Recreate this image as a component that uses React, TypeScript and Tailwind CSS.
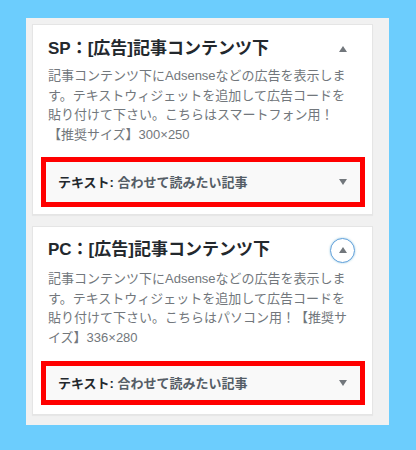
import React from "react";

const font = { fontFamily: '"Liberation Sans", "Noto Sans CJK JP", sans-serif' };

function Tri({ down = false }: { down?: boolean }) {
  return (
    <svg width="8" height="6" viewBox="0 0 8 6" className="block">
      {down ? <polygon points="0,0 8,0 4,6" fill="#72777c" /> : <polygon points="4,0 8,6 0,6" fill="#72777c" />}
    </svg>
  );
}

function Widget({ h }: { h: string }) {
  return (
    <div className="ml-[8px] mr-[7px] border-[5px] border-[#ff0000]">
      <div className={`${h} bg-[#f9f9f9] flex items-center justify-between pl-[12px] pr-[13px]`}>
        <div className="text-[13px] font-bold leading-none">
          <span className="text-[#23282d]">テキスト:</span>
          <span className="text-[#555d66]"> 合わせて読みたい記事</span>
        </div>
        <Tri down />
      </div>
    </div>
  );
}

export default function App() {
  return (
    <div className="w-[416px] h-[450px] bg-[#6ccdfd] pt-[18px] pl-[26px]" style={font}>
      <div className="w-[363px] bg-[#f1f1f1] pt-[6px] pl-[6px] pr-[16px] pb-[10px] flex flex-col gap-[11px]">
        {/* Card 1 */}
        <div className="bg-white border border-[#e5e5e5] shadow-[0_1px_1px_rgba(0,0,0,0.04)] pt-[12px] pb-[7px]">
          <div className="flex items-center justify-between pl-[15px] pr-[17px] h-[24px]">
            <h3 className="text-[17px] font-bold text-[#23282d] leading-[24px]">SP：[広告]記事コンテンツ下</h3>
            <div className="w-[24px] h-[24px] flex items-center justify-center">
              <Tri />
            </div>
          </div>
          <p className="mt-[5px] px-[15px] text-[13px] leading-[19.5px] text-[#72777c]">
            記事コンテンツ下にAdsenseなどの広告を表示します。テキストウィジェットを追加して広告コードを貼り付けて下さい。こちらはスマートフォン用！【推奨サイズ】300×250
          </p>
          <div className="mt-[13px]">
            <Widget h="h-[40px]" />
          </div>
        </div>
        {/* Card 2 */}
        <div className="bg-white border border-[#e5e5e5] shadow-[0_1px_1px_rgba(0,0,0,0.04)] pt-[11px] pb-[9px]">
          <div className="flex items-center justify-between pl-[15px] pr-[17px] h-[24px]">
            <h3 className="text-[17px] font-bold text-[#23282d] leading-[24px]">PC：[広告]記事コンテンツ下</h3>
            <div className="w-[25px] h-[25px] rounded-full border border-[#5b9dd9] flex items-center justify-center shadow-[0_0_2px_rgba(30,140,190,0.5)]">
              <Tri />
            </div>
          </div>
          <p className="mt-[7px] px-[15px] text-[13px] leading-[19.5px] text-[#72777c]">
            記事コンテンツ下にAdsenseなどの広告を表示します。テキストウィジェットを追加して広告コードを貼り付けて下さい。こちらはパソコン用！【推奨サイズ】336×280
          </p>
          <div className="mt-[14px]">
            <Widget h="h-[34px]" />
          </div>
        </div>
      </div>
    </div>
  );
}
